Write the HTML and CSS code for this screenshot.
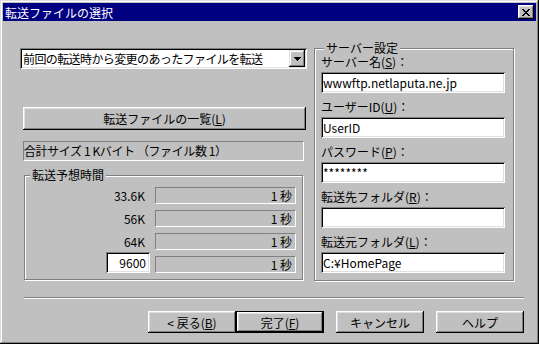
FILE: index.html
```html
<!DOCTYPE html>
<html>
  <head>
    <title>転送ファイルの選択</title>
    <meta charset='utf-8'>
    <link rel="stylesheet" href="styles.css">
  </head>
  <body>
    <div class="window">
      <div class="titlebar">
        <span class="title">転送ファイルの選択</span>
        <span class="close">
          <svg width="8" height="7" viewBox="0 0 8 7"><path d="M0 0h2v1H0zM6 0h2v1H6zM1 1h2v1H1zM5 1h2v1H5zM2 2h4v1H2zM3 3h2v1H3zM2 4h4v1H2zM1 5h2v1H1zM5 5h2v1H5zM0 6h2v1H0zM6 6h2v1H6z" fill="#000"/></svg>
        </span>
      </div>

      <div class="panes">
        <div class="left">
          <div class="combo">
            <span class="combo-text">前回の転送時から変更のあったファイルを転送</span>
            <span class="combo-btn">
              <svg width="7" height="4" viewBox="0 0 7 4"><path d="M0 0h7v1H0zM1 1h5v1H1zM2 2h3v1H2zM3 3h1v1H3z" fill="#000"/></svg>
            </span>
          </div>
          <div class="button list-btn">転送ファイルの一覧(<u>L</u>)</div>
          <div class="static total">合計サイズ 1 Kバイト （ファイル数 1）</div>

          <fieldset class="group time">
            <legend>転送予想時間</legend>
            <div class="rates">
              <div class="rate"><span class="rate-label">33.6K</span><span class="static rate-value">1 秒</span></div>
              <div class="rate"><span class="rate-label">56K</span><span class="static rate-value">1 秒</span></div>
              <div class="rate"><span class="rate-label">64K</span><span class="static rate-value">1 秒</span></div>
              <div class="rate custom"><span class="rate-label"><input class="edit speed" type="text" value="9600"></span><span class="static rate-value">1 秒</span></div>
            </div>
          </fieldset>
        </div>

        <fieldset class="group server">
          <legend>サーバー設定</legend>
          <div class="fields">
            <label class="field"><span class="field-label">サーバー名(<u>S</u>)：</span><input class="edit" type="text" value="wwwftp.netlaputa.ne.jp"></label>
            <label class="field"><span class="field-label">ユーザーID(<u>U</u>)：</span><input class="edit" type="text" value="UserID"></label>
            <label class="field"><span class="field-label">パスワード(<u>P</u>)：</span><input class="edit" type="text" value="********"></label>
            <label class="field"><span class="field-label">転送先フォルダ(<u>R</u>)：</span><input class="edit" type="text" value=""></label>
            <label class="field"><span class="field-label">転送元フォルダ(<u>L</u>)：</span><input class="edit" type="text" value="C:¥HomePage"></label>
          </div>
        </fieldset>
      </div>

      <div class="separator"></div>

      <div class="actions">
        <div class="button">&lt; 戻る(<u>B</u>)</div>
        <div class="button default">完了(<u>F</u>)</div>
        <div class="button spaced">キャンセル</div>
        <div class="button spaced">ヘルプ</div>
      </div>
    </div>
  </body>
</html>
```

FILE: styles.css
```css
* { box-sizing: border-box; }

html, body { margin: 0; }

body {
  width: 539px;
  height: 344px;
  font-family: "Noto Sans CJK JP", "Noto Sans", sans-serif;
  font-size: 12px;
  line-height: 13px;
  color: #000;
  background: #c0c0c0;
  overflow: hidden;
}

u { text-decoration: underline; text-underline-offset: 1px; }

/* Window frame */
.window {
  width: 539px;
  height: 344px;
  padding: 3px;
  background: #c0c0c0;
  box-shadow: inset -1px -1px #000, inset 1px 1px #dfdfdf,
              inset -2px -2px #808080, inset 2px 2px #fff;
  display: flex;
  flex-direction: column;
}

.titlebar {
  height: 18px;
  padding: 0 2px;
  background: #000080;
  color: #fff;
  display: flex;
  align-items: center;
  justify-content: space-between;
}

.close {
  width: 16px;
  height: 14px;
  background: #c0c0c0;
  display: flex;
  align-items: center;
  justify-content: center;
  box-shadow: inset -1px -1px #000, inset 1px 1px #fff,
              inset -2px -2px #808080, inset 2px 2px #dfdfdf;
}

/* Two columns */
.panes {
  display: flex;
  align-items: flex-start;
  padding: 21px 0 0 17px;
}

.left {
  width: 287px;
  margin-top: 6px;
  display: flex;
  flex-direction: column;
}

.combo {
  height: 21px;
  padding: 2px;
  background: #fff;
  display: flex;
  box-shadow: inset 1px 1px #808080, inset -1px -1px #fff,
              inset 2px 2px #000, inset -2px -2px #dfdfdf;
}
.combo-text {
  flex: 1;
  padding-left: 1px;
  line-height: 17px;
  letter-spacing: -0.6px;
  white-space: nowrap;
  overflow: hidden;
}
.combo-btn {
  width: 16px;
  height: 17px;
  background: #c0c0c0;
  display: flex;
  align-items: center;
  justify-content: center;
  box-shadow: inset -1px -1px #000, inset 1px 1px #dfdfdf,
              inset -2px -2px #808080, inset 2px 2px #fff;
}

.button {
  width: 88px;
  height: 22px;
  display: flex;
  align-items: center;
  justify-content: center;
  background: #c0c0c0;
  box-shadow: inset -1px -1px #000, inset 1px 1px #fff,
              inset -2px -2px #808080, inset 2px 2px #dfdfdf;
}
.button.default {
  box-shadow: inset 0 0 0 1px #000, inset -2px -2px #000, inset 2px 2px #fff,
              inset -3px -3px #808080, inset 3px 3px #dfdfdf;
}
.list-btn {
  width: 283px;
  height: 23px;
  margin: 38px 0 0 3px;
}

.static {
  background: #c0c0c0;
  border: 1px solid;
  border-color: #808080 #fff #fff #808080;
  white-space: nowrap;
}
.total {
  width: 281px;
  height: 20px;
  margin: 11px 0 0 3px;
  line-height: 18px;
  letter-spacing: -0.4px;
}

/* Group boxes */
.group {
  margin: 0;
  min-width: 0;
  border: 1px solid #808080;
  box-shadow: inset 1px 1px #fff, 1px 1px #fff;
}
.group legend {
  padding: 0 2px;
  line-height: 12px;
  background: #c0c0c0;
}

.time {
  width: 279px;
  margin: 8px 0 0 4px;
  padding: 6px 0 6px 0;
}
.time legend { margin-left: 5px; }

.rates {
  display: flex;
  flex-direction: column;
  gap: 6px;
}
.rate {
  display: flex;
  align-items: flex-end;
  gap: 5px;
}
.rate-label {
  width: 125px;
  padding-right: 5px;
  text-align: right;
  line-height: 17px;
}
.rate-value {
  width: 141px;
  height: 17px;
  padding-right: 3px;
  text-align: right;
  line-height: 15px;
}
.rate.custom { margin-top: -4px; }
.rate.custom .rate-label {
  padding-right: 0;
  display: flex;
  justify-content: flex-end;
}

.edit {
  display: block;
  width: 184px;
  height: 21px;
  margin: 0;
  padding: 0 2px;
  border: 0;
  outline: 0;
  font: inherit;
  color: #000;
  background: #fff;
  box-shadow: inset 1px 1px #808080, inset -1px -1px #fff,
              inset 2px 2px #000, inset -2px -2px #dfdfdf;
}
.edit.speed {
  width: 44px;
  padding-right: 4px;
  text-align: right;
}

.server {
  width: 200px;
  margin-left: 7px;
  padding: 1px 8px 7px 6px;
}
.server legend { margin-left: 3px; }

.fields {
  display: flex;
  flex-direction: column;
  gap: 7px;
}
.field {
  display: flex;
  flex-direction: column;
}
.field-label {
  margin-bottom: 4px;
  white-space: nowrap;
}

/* Bottom */
.separator {
  width: 500px;
  height: 2px;
  margin: 16px 0 0 21px;
  border-top: 1px solid #808080;
  border-bottom: 1px solid #fff;
}

.actions {
  display: flex;
  justify-content: flex-end;
  margin-top: 12px;
  padding-right: 12px;
}
.button.spaced { margin-left: 12px; }
```
